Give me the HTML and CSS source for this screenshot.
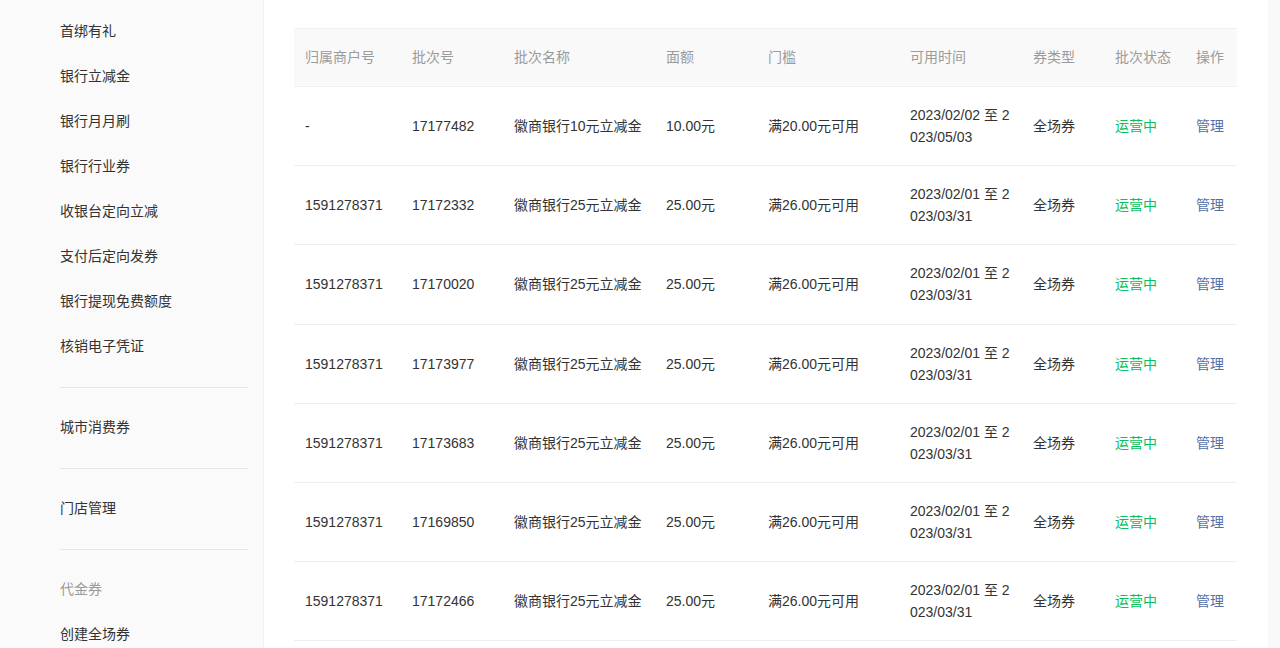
FILE: index.html
```html
<html lang="zh-CN">
    <head>
        <meta http-equiv="content-type" content="text/html; charset=utf-8" />
        <link rel="stylesheet" href="styles.css">
    </head>
    <body>
        <div class="page">
            <div class="sideMenu">
                <a class="menuItem">首绑有礼</a>
                <a class="menuItem">银行立减金</a>
                <a class="menuItem">银行月月刷</a>
                <a class="menuItem">银行行业券</a>
                <a class="menuItem">收银台定向立减</a>
                <a class="menuItem">支付后定向发券</a>
                <a class="menuItem">银行提现免费额度</a>
                <a class="menuItem">核销电子凭证</a>
                <div class="menuLine"></div>
                <a class="menuItem">城市消费券</a>
                <div class="menuLine"></div>
                <a class="menuItem">门店管理</a>
                <div class="menuLine"></div>
                <span class="menuItem menuTitle">代金券</span>
                <a class="menuItem">创建全场券</a>
            </div>

            <div class="mainContent">
                <table class="batchTable">
                    <colgroup>
                        <col style="width:107px">
                        <col style="width:102px">
                        <col style="width:152px">
                        <col style="width:102px">
                        <col style="width:142px">
                        <col style="width:123px">
                        <col style="width:82px">
                        <col style="width:81px">
                        <col style="width:52px">
                    </colgroup>
                    <tr>
                        <th>归属商户号</th>
                        <th>批次号</th>
                        <th>批次名称</th>
                        <th>面额</th>
                        <th>门槛</th>
                        <th>可用时间</th>
                        <th>券类型</th>
                        <th>批次状态</th>
                        <th>操作</th>
                    </tr>
                    <tr>
                        <td>-</td>
                        <td>17177482</td>
                        <td>徽商银行10元立减金</td>
                        <td>10.00元</td>
                        <td>满20.00元可用</td>
                        <td class="dateCell">2023/02/02 至 2023/05/03</td>
                        <td>全场券</td>
                        <td class="statusOn">运营中</td>
                        <td><a class="link">管理</a></td>
                    </tr>
                    <tr>
                        <td>1591278371</td>
                        <td>17172332</td>
                        <td>徽商银行25元立减金</td>
                        <td>25.00元</td>
                        <td>满26.00元可用</td>
                        <td class="dateCell">2023/02/01 至 2023/03/31</td>
                        <td>全场券</td>
                        <td class="statusOn">运营中</td>
                        <td><a class="link">管理</a></td>
                    </tr>
                    <tr>
                        <td>1591278371</td>
                        <td>17170020</td>
                        <td>徽商银行25元立减金</td>
                        <td>25.00元</td>
                        <td>满26.00元可用</td>
                        <td class="dateCell">2023/02/01 至 2023/03/31</td>
                        <td>全场券</td>
                        <td class="statusOn">运营中</td>
                        <td><a class="link">管理</a></td>
                    </tr>
                    <tr>
                        <td>1591278371</td>
                        <td>17173977</td>
                        <td>徽商银行25元立减金</td>
                        <td>25.00元</td>
                        <td>满26.00元可用</td>
                        <td class="dateCell">2023/02/01 至 2023/03/31</td>
                        <td>全场券</td>
                        <td class="statusOn">运营中</td>
                        <td><a class="link">管理</a></td>
                    </tr>
                    <tr>
                        <td>1591278371</td>
                        <td>17173683</td>
                        <td>徽商银行25元立减金</td>
                        <td>25.00元</td>
                        <td>满26.00元可用</td>
                        <td class="dateCell">2023/02/01 至 2023/03/31</td>
                        <td>全场券</td>
                        <td class="statusOn">运营中</td>
                        <td><a class="link">管理</a></td>
                    </tr>
                    <tr>
                        <td>1591278371</td>
                        <td>17169850</td>
                        <td>徽商银行25元立减金</td>
                        <td>25.00元</td>
                        <td>满26.00元可用</td>
                        <td class="dateCell">2023/02/01 至 2023/03/31</td>
                        <td>全场券</td>
                        <td class="statusOn">运营中</td>
                        <td><a class="link">管理</a></td>
                    </tr>
                    <tr>
                        <td>1591278371</td>
                        <td>17172466</td>
                        <td>徽商银行25元立减金</td>
                        <td>25.00元</td>
                        <td>满26.00元可用</td>
                        <td class="dateCell">2023/02/01 至 2023/03/31</td>
                        <td>全场券</td>
                        <td class="statusOn">运营中</td>
                        <td><a class="link">管理</a></td>
                    </tr>
                </table>
            </div>

            <div class="rightGutter"></div>
        </div>
    </body>
</html>
```

FILE: styles.css
```css
* {
    font-family: "Liberation Sans", "Noto Sans CJK SC", sans-serif;
}

body {
    margin: 0;
    height: 648px;
    overflow: hidden;
    color: #333333;
    font-size: 14px;
}

.page {
    display: flex;
    height: 648px;
}

.sideMenu {
    width: 188px;
    flex-shrink: 0;
    padding: 9px 15px 0 60px;
    background-color: #fafafa;
    border-right: 1px solid #f0f0f0;
}

.menuItem {
    display: block;
    height: 45px;
    line-height: 45px;
    font-size: 14px;
    color: #333333;
}

.menuTitle {
    color: #9a9a9a;
}

.menuLine {
    height: 1px;
    margin: 18px 0 17px 0;
    background-color: #e5e5e5;
}

.mainContent {
    flex: 1;
    padding: 28px 30px 0 30px;
    background-color: #ffffff;
}

.rightGutter {
    width: 12px;
    flex-shrink: 0;
    background-color: #f9f9f9;
}

.batchTable {
    width: 943px;
    table-layout: fixed;
    border-collapse: collapse;
    font-size: 14px;
}

.batchTable th {
    height: 58px;
    padding: 0 11px 3px 11px;
    text-align: left;
    font-weight: normal;
    font-size: 14px;
    color: #9b9b9b;
    background-color: #f9f9f9;
    border-top: 1px solid #f0f0f0;
    border-bottom: 1px solid #f0f0f0;
}

.batchTable td {
    padding: 17.1px 11px;
    line-height: 22px;
    height: 44px;
    text-align: left;
    font-size: 14px;
    color: #333333;
    border-bottom: 1px solid #eeeeee;
    word-break: break-all;
}

.statusOn {
    color: #07c160 !important;
}

.link {
    color: #5470a6;
    text-decoration: none;
}
```
